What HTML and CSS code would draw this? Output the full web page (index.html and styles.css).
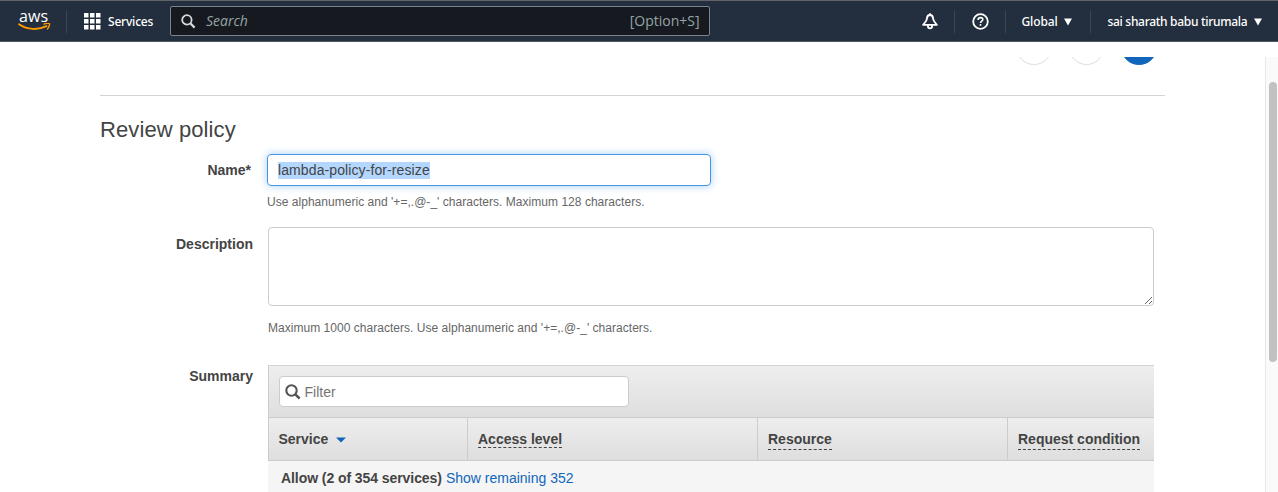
FILE: index.html
```html
<!DOCTYPE html>
<html lang="en">
<head>
<meta charset="utf-8">
<title>Review policy</title>
<link rel="stylesheet" href="styles.css">
</head>
<body>
<header class="topnav">
  <div class="logo">
    <span class="logo-text">aws</span>
    <svg width="34" height="8" viewBox="0 0 34 8" fill="none" stroke="#f90" stroke-linecap="round">
      <path d="M1 1.200C9.500 6.900 20 7.300 28.500 3.200" stroke-width="1.900"/>
      <path d="M26 1.100c2-1 5-1.100 5.400-.5.4.8-.3 3.700-2 5.300" stroke-width="1.400"/>
    </svg>
  </div>
  <span class="divider divider-first"></span>
  <div class="services">
    <svg width="17" height="17" viewBox="0 0 17 17" fill="#fff">
      <path d="M0 0h4.500v4.500H0zM6 0h4.500v4.500H6zM12 0h4.500v4.500H12zM0 6h4.500v4.500H0zM6 6h4.500v4.500H6zM12 6h4.500v4.500H12zM0 12h4.500v4.500H0zM6 12h4.500v4.500H6zM12 12h4.500v4.500H12z"/>
    </svg>
    <span class="services-label">Services</span>
  </div>
  <div class="search">
    <svg width="15" height="15" viewBox="0 0 15 15" fill="none" stroke="#d5dbdb" stroke-width="1.8">
      <circle cx="5.900" cy="5.900" r="4.700"/><path d="M9.300 9.300l4.300 4.300" stroke-width="2.200"/>
    </svg>
    <span class="search-hint">Search</span>
    <span class="search-key">[Option+S]</span>
  </div>
  <div class="nav-right">
    <svg class="bell" width="16" height="17" viewBox="0 0 16 17" fill="none" stroke="#fff" stroke-width="1.800" stroke-linejoin="round">
      <path d="M8 2C5.900 2 5 3.600 4.900 5.600 4.800 8 3.200 9.300 1.100 11.800h13.800C12.800 9.300 11.200 8 11.100 5.600 11 3.600 10.100 2 8 2z"/>
      <path d="M8 .3v2M5.900 12v1a2.100 2.300 0 0 0 4.200 0V12"/>
    </svg>
    <span class="divider"></span>
    <svg class="help" width="17" height="17" viewBox="0 0 17 17" fill="none" stroke="#fff" stroke-width="1.800">
      <circle cx="8.500" cy="8.500" r="7.300"/>
      <path d="M6.200 7.100V6.600c0-1.200 1-2 2.300-2s2.300.8 2.300 1.900c0 1.700-2.300 1.500-2.300 3.500M8.500 11.100v1.700" stroke-width="1.600"/>
    </svg>
    <span class="divider"></span>
    <div class="menu region"><span class="region-label">Global</span><svg width="8" height="8" viewBox="0 0 8 8"><path d="M0 .5h8L4 7.500z" fill="#fff"/></svg></div>
    <span class="divider"></span>
    <div class="menu account"><span class="account-label">sai sharath babu tirumala</span><svg width="8" height="8" viewBox="0 0 8 8"><path d="M0 .5h8L4 7.500z" fill="#fff"/></svg></div>
  </div>
</header>
<div class="viewport">
  <main class="content">
    <div class="steps"><span class="step"></span><span class="step"></span><span class="step step-active"></span></div>
    <h1 class="title">Review policy</h1>
    <div class="field field-name">
      <span class="label">Name*</span>
      <div class="control">
        <div class="name-input"><span class="selected">lambda-policy-for-resize</span></div>
        <p class="hint">Use alphanumeric and '+=,.@-_' characters. Maximum 128 characters.</p>
      </div>
    </div>
    <div class="field field-description">
      <span class="label">Description</span>
      <div class="control">
        <div class="description-input">
          <svg width="9" height="9" viewBox="0 0 9 9" stroke="#666" stroke-width="1"><path d="M1 8L8 1M5 8l3-3"/></svg>
        </div>
        <p class="hint">Maximum 1000 characters. Use alphanumeric and '+=,.@-_' characters.</p>
      </div>
    </div>
    <div class="field field-summary">
      <span class="label">Summary</span>
      <div class="control table">
        <div class="toolbar">
          <div class="filter">
            <svg width="16" height="16" viewBox="0 0 16 16" fill="none" stroke="#555" stroke-width="2.100"><circle cx="6.500" cy="6.500" r="5.200"/><path d="M10.300 10.300l4.300 4.200" stroke-width="2.500"/></svg>
            <span class="filter-hint">Filter</span>
          </div>
        </div>
        <div class="thead">
          <div class="th"><span class="th-service">Service</span><svg class="sort" width="10" height="6" viewBox="0 0 10 6"><path d="M0 .5h10L5 5.500z" fill="#1166bb"/></svg></div>
          <div class="th"><span class="th-term term-high">Access level</span></div>
          <div class="th"><span class="th-term term-low">Resource</span></div>
          <div class="th"><span class="th-term term-low">Request condition</span></div>
        </div>
        <div class="row"><b class="allow">Allow (2 of 354 services)</b><a class="link">Show remaining 352</a></div>
      </div>
    </div>
  </main>
  <div class="scrollbar"><div class="thumb"></div></div>
</div>
</body>
</html>
```
FILE: styles.css
```css
* { box-sizing: border-box; }
body {
  margin: 0;
  height: 492px;
  overflow: hidden;
  background: #fff;
  color: #444;
  font: 14px/18px "Liberation Sans", Arial, sans-serif;
}
svg { display: block; flex: none; }

.topnav {
  display: flex;
  align-items: center;
  height: 42px;
  padding: 1px 0 0 18px;
  background: #232f3e;
  border-top: 1px solid #626567;
  border-bottom: 1px solid #4d5661;
  color: #fff;
  font: 500 12px/18px "Noto Sans", "Open Sans", sans-serif;
  white-space: nowrap;
}
.logo { width: 34px; height: 25px; }
.logo-text {
  display: block;
  height: 16px;
  margin: -2px 0 0 1px;
  font: 500 16px/18px "Open Sans", sans-serif;
  letter-spacing: 0.1px;
}
.divider { width: 1px; height: 22px; background: #3c4653; flex: none; }
.divider-first { margin-left: 14px; }
.services { display: flex; align-items: center; width: 86px; margin-left: 17px; gap: 7px; }
.services-label { letter-spacing: -0.2px; }
.search {
  display: flex;
  align-items: center;
  width: 539.500px;
  height: 30px;
  margin-bottom: 2px;
  padding: 1px 9px 0 10px;
  background: #16191f;
  border: 1px solid #79848a;
  border-radius: 2px;
  color: #95a5a6;
  font: 14px/20px "Open Sans", sans-serif;
}
.search-hint { margin-left: 10px; font-style: italic; }
.search-key { margin-left: auto; }
.nav-right { display: flex; align-items: center; margin-left: 212px; }
.bell { margin-right: 16px; }
.help { margin: 0 16px 0 17px; }
.menu { display: flex; align-items: center; justify-content: space-between; }
.region { width: 50px; margin: 0 18px 0 16px; }
.region-label { letter-spacing: -0.1px; }
.account { width: 154px; margin-left: 17px; }
.account-label { letter-spacing: -0.3px; }

.viewport { display: flex; height: 435px; margin-top: 15px; overflow: hidden; }
.content { width: 1265px; padding-left: 100px; }
.steps {
  display: flex;
  justify-content: flex-end;
  gap: 17px;
  width: 1065px;
  height: 39px;
  padding-right: 8.500px;
  border-bottom: 1px solid #d3d3d3;
}
.step { width: 35.500px; height: 35.500px; margin-top: -28px; border: 1px solid #ddd; border-radius: 50%; }
.step-active { background: #16b; border-color: #16b; }
.title { margin: 19px 0 0; font-size: 22px; font-weight: 400; line-height: 30px; letter-spacing: 0.1px; }
.field { display: flex; }
.label { width: 153px; text-align: right; font-weight: 700; flex: none; }
.control { width: 886px; margin-left: 15px; }
.hint { margin: 0; color: #666; font-size: 12px; line-height: 16px; letter-spacing: 0.030px; }

.field-name { margin-top: 9px; }
.field-name .label { padding-top: 7px; padding-right: 2px; }
.field-name .control { margin-left: 14px; }
.name-input {
  display: flex;
  align-items: center;
  width: 444px;
  height: 32px;
  padding-left: 10px;
  border: 1px solid #4596e6;
  border-radius: 4px;
  box-shadow: 0 0 8px #a9cdf5;
}
.selected { background: #b3d7ff; line-height: 17px; letter-spacing: 0.1px; }
.field-name .hint { margin-top: 8px; }

.field-description { margin-top: 17px; }
.field-description .label { padding-top: 8px; }
.description-input {
  display: flex;
  align-items: flex-end;
  justify-content: flex-end;
  height: 79px;
  border: 1px solid #ccc;
  border-radius: 4px;
}
.field-description .hint { margin-top: 14px; }

.field-summary { margin-top: 29px; }
.field-summary .label { padding-top: 2px; }
.toolbar {
  height: 53px;
  padding: 10px;
  background: linear-gradient(#eee, #dedede);
  border: 1px solid #ccc;
  border-top-color: #d5d5d5;
  border-right: 0;
}
.filter {
  display: flex;
  align-items: center;
  gap: 4px;
  width: 350px;
  height: 31px;
  margin-left: -0.5px;
  padding-left: 5px;
  border: 1px solid #ccc;
  border-radius: 4px;
  background: #fff;
  color: #757575;
}
.thead {
  display: grid;
  grid-template-columns: 199px 290px 250px 1fr;
  height: 43px;
  background: linear-gradient(#eee, #dedede);
  border-bottom: 1px solid #ccc;
  border-left: 1px solid #ccc;
  font-weight: 700;
}
.th { display: flex; align-items: flex-start; padding: 12px 0 0 9.500px; white-space: nowrap; }
.th + .th { margin-left: -1px; padding-left: 10px; border-left: 1px solid #ccc; }
.sort { margin: 7px 0 0 8px; }
.th-term { border-bottom: 1px dashed #444; }
.term-high { margin-top: 2px; line-height: 15px; }
.term-low { padding-bottom: 1px; }
.row { display: flex; gap: 4px; height: 31px; padding: 8px 0 0 13px; background: #f5f5f5; }
.allow { letter-spacing: -0.070px; }
.link { color: #16b; }

.scrollbar { width: 13px; padding: 25px 0 0 3px; background: #fafafa; border-left: 1px solid #e8e8e8; }
.thumb { width: 8px; height: 280px; border-radius: 4px; background: #c1c1c1; }
```
